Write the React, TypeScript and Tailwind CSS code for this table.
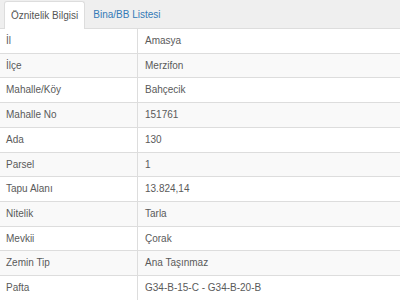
import React from "react";

const rows: [string, string][] = [
  ["İl", "Amasya"],
  ["İlçe", "Merzifon"],
  ["Mahalle/Köy", "Bahçecik"],
  ["Mahalle No", "151761"],
  ["Ada", "130"],
  ["Parsel", "1"],
  ["Tapu Alanı", "13.824,14"],
  ["Nitelik", "Tarla"],
  ["Mevkii", "Çorak"],
  ["Zemin Tip", "Ana Taşınmaz"],
  ["Pafta", "G34-B-15-C - G34-B-20-B"],
];

export default function App() {
  return (
    <div
      className="w-[400px] h-[300px] overflow-hidden bg-white text-[10px] text-[#5a5a5a]"
      style={{ fontFamily: '"Liberation Sans", Arial, sans-serif' }}
    >
      <div className="flex h-[29px] items-end bg-[#efefef] border-b border-[#ddd] pl-[4px]">
        <div className="h-[28px] -mb-px flex items-center bg-white border border-b-0 border-[#ddd] rounded-t-[3px] px-[6px] text-[#555]">
          Öznitelik Bilgisi
        </div>
        <div className="h-[28px] flex items-center px-[8px] text-[#337ab7]">
          Bina/BB Listesi
        </div>
      </div>
      <div>
        {rows.map(([k, v], i) => (
          <div
            key={k}
            className={`flex leading-[15.7px] ${i === 0 ? "" : "border-t border-[#ddd]"} ${i % 2 === 1 ? "bg-[#f9f9f9]" : "bg-white"}`}
          >
            <div className="w-[138px] shrink-0 py-[4px] pl-[6px] border-r border-[#ddd]">{k}</div>
            <div className="flex-1 py-[4px] pl-[7px]">{v}</div>
          </div>
        ))}
      </div>
    </div>
  );
}
